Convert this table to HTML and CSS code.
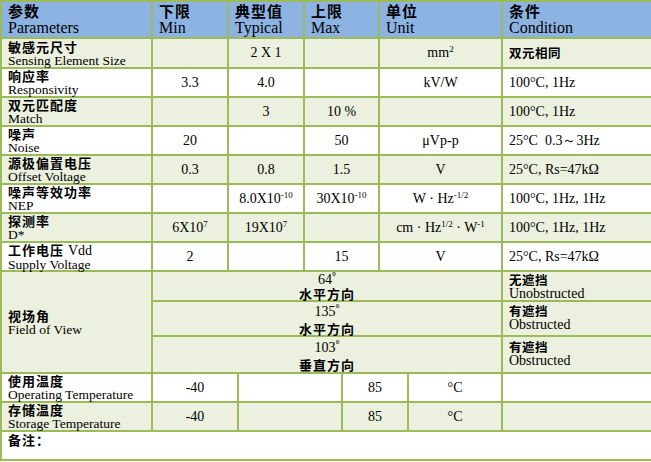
FILE: index.html
```html
<!DOCTYPE html>
<html lang="zh">
<head>
<meta charset="utf-8">
<title>Parameters</title>
<link rel="stylesheet" href="styles.css">
</head>
<body>
<div class="sheet">
  <div class="c h lab"><span class="zh hz">参数</span><span class="en he">Parameters</span></div>
  <div class="c h lab"><span class="zh hz">下限</span><span class="en he">Min</span></div>
  <div class="c h lab sp2"><span class="zh hz">典型值</span><span class="en he">Typical</span></div>
  <div class="c h lab sp2"><span class="zh hz">上限</span><span class="en he">Max</span></div>
  <div class="c h lab sp2"><span class="zh hz">单位</span><span class="en he">Unit</span></div>
  <div class="c h lab"><span class="zh hz">条件</span><span class="en he">Condition</span></div>

  <div class="c g lab"><span class="zh">敏感元尺寸</span><span class="en">Sensing Element Size</span></div>
  <div class="c g ctr"></div>
  <div class="c g ctr sp2"><span class="v">2 X 1</span></div>
  <div class="c g ctr sp2"></div>
  <div class="c g ctr sp2"><span class="v">mm<sup>2</sup></span></div>
  <div class="c g lab"><span class="zh cz">双元相同</span></div>

  <div class="c w lab"><span class="zh">响应率</span><span class="en">Responsivity</span></div>
  <div class="c w ctr"><span class="v">3.3</span></div>
  <div class="c w ctr sp2"><span class="v">4.0</span></div>
  <div class="c w ctr sp2"></div>
  <div class="c w ctr sp2"><span class="v">kV/W</span></div>
  <div class="c w lab"><span class="v">100°C, 1Hz</span></div>

  <div class="c g lab"><span class="zh">双元匹配度</span><span class="en">Match</span></div>
  <div class="c g ctr"></div>
  <div class="c g ctr sp2"><span class="v">3</span></div>
  <div class="c g ctr sp2"><span class="v">10 %</span></div>
  <div class="c g ctr sp2"></div>
  <div class="c g lab"><span class="v">100°C, 1Hz</span></div>

  <div class="c w lab"><span class="zh">噪声</span><span class="en">Noise</span></div>
  <div class="c w ctr"><span class="v">20</span></div>
  <div class="c w ctr sp2"></div>
  <div class="c w ctr sp2"><span class="v">50</span></div>
  <div class="c w ctr sp2"><span class="v">μVp-p</span></div>
  <div class="c w lab"><span class="v">25°C&nbsp;&nbsp;0.3～3Hz</span></div>

  <div class="c g lab"><span class="zh">源极偏置电压</span><span class="en">Offset Voltage</span></div>
  <div class="c g ctr"><span class="v">0.3</span></div>
  <div class="c g ctr sp2"><span class="v">0.8</span></div>
  <div class="c g ctr sp2"><span class="v">1.5</span></div>
  <div class="c g ctr sp2"><span class="v">V</span></div>
  <div class="c g lab"><span class="v">25°C, Rs=47kΩ</span></div>

  <div class="c w lab"><span class="zh">噪声等效功率</span><span class="en">NEP</span></div>
  <div class="c w ctr"></div>
  <div class="c w ctr sp2"><span class="v">8.0X10<sup>-10</sup></span></div>
  <div class="c w ctr sp2"><span class="v">30X10<sup>-10</sup></span></div>
  <div class="c w ctr sp2"><span class="v">W · Hz<sup>-1/2</sup></span></div>
  <div class="c w lab"><span class="v">100°C, 1Hz, 1Hz</span></div>

  <div class="c g lab"><span class="zh">探测率</span><span class="en">D*</span></div>
  <div class="c g ctr"><span class="v">6X10<sup>7</sup></span></div>
  <div class="c g ctr sp2"><span class="v">19X10<sup>7</sup></span></div>
  <div class="c g ctr sp2"></div>
  <div class="c g ctr sp2"><span class="v">cm · Hz<sup>1/2</sup> · W<sup>-1</sup></span></div>
  <div class="c g lab"><span class="v">100°C, 1Hz, 1Hz</span></div>

  <div class="c w lab"><span class="zh">工作电压 <span class="inl">Vdd</span></span><span class="en">Supply Voltage</span></div>
  <div class="c w ctr"><span class="v">2</span></div>
  <div class="c w ctr sp2"></div>
  <div class="c w ctr sp2"><span class="v">15</span></div>
  <div class="c w ctr sp2"><span class="v">V</span></div>
  <div class="c w lab"><span class="v">25°C, Rs=47kΩ</span></div>

  <div class="c g lab fov-name"><span class="zh">视场角</span><span class="en">Field of View</span></div>
  <div class="c g ctr mid m1"><span class="v">64<sup class="deg">°</sup></span><span class="zh">水平方向</span></div>
  <div class="c g lab top t1"><span class="zh cz">无遮挡</span><span class="en">Unobstructed</span></div>
  <div class="c g ctr mid m2"><span class="v">135<sup class="deg">°</sup></span><span class="zh">水平方向</span></div>
  <div class="c g lab top t2"><span class="zh cz">有遮挡</span><span class="en">Obstructed</span></div>
  <div class="c g ctr mid m3"><span class="v">103<sup class="deg">°</sup></span><span class="zh">垂直方向</span></div>
  <div class="c g lab top t3"><span class="zh cz">有遮挡</span><span class="en">Obstructed</span></div>

  <div class="c w lab"><span class="zh">使用温度</span><span class="en">Operating Temperature</span></div>
  <div class="c w ctr sp2"><span class="v">-40</span></div>
  <div class="c w ctr sp2"></div>
  <div class="c w ctr sp2"><span class="v">85</span></div>
  <div class="c w ctr"><span class="v">°C</span></div>
  <div class="c w lab"></div>

  <div class="c g lab"><span class="zh">存储温度</span><span class="en">Storage Temperature</span></div>
  <div class="c g ctr sp2"><span class="v">-40</span></div>
  <div class="c g ctr sp2"></div>
  <div class="c g ctr sp2"><span class="v">85</span></div>
  <div class="c g ctr"><span class="v">°C</span></div>
  <div class="c g lab"></div>

  <div class="c w lab top note"><span class="zh">备注：</span></div>
</div>
</body>
</html>
```
FILE: styles.css
```css
html, body {
  margin: 0;
  padding: 0;
  overflow: hidden;
  background: #ffffff;
}

body {
  width: 651px;
  height: 462px;
  font-family: "Liberation Serif", "Noto Sans CJK SC", serif;
  color: #000000;
}

.sheet {
  display: grid;
  grid-template-columns: 149px 74px 8px 64px 36px 35px 27px 92px 150px;
  grid-template-rows: 35px 28px 27px 27px 27px 27px 27px 27px 27px 28px 33px 35px 27px 27px 27px;
  gap: 2px;
  padding: 2px;
  width: max-content;
  background: #9bbb59;
}

.c {
  display: flex;
  flex-direction: column;
  justify-content: center;
  min-width: 0;
  white-space: nowrap;
}

.h { background: #8db3e2; }
.g { background: #ebf1de; }
.w { background: #ffffff; }

.sp2 { grid-column: span 2; }

.lab {
  align-items: flex-start;
  padding-left: 6px;
}

.ctr {
  align-items: center;
  text-align: center;
}

.top { justify-content: flex-start; }

.zh {
  font-family: "Noto Sans CJK SC", "Noto Sans CJK TC", sans-serif;
  font-weight: 700;
  font-size: 13px;
  line-height: 14px;
  letter-spacing: 1px;
}

.en {
  font-family: "Liberation Serif", serif;
  font-size: 13.5px;
  line-height: 13px;
}

.inl {
  font-family: "Liberation Serif", serif;
  font-size: 14px;
  font-weight: 400;
  letter-spacing: 0;
}

.hz {
  font-size: 15px;
  line-height: 16px;
  letter-spacing: 1px;
}

.he {
  font-size: 16px;
  line-height: 17px;
}

.cz {
  font-size: 12.5px;
  letter-spacing: 0.5px;
}

.v {
  font-family: "Liberation Serif", serif;
  font-size: 14px;
  line-height: 16px;
}

sup {
  font-size: 9px;
  line-height: 0;
  vertical-align: 5px;
}

sup.deg {
  font-size: 10px;
  font-weight: 700;
  vertical-align: 4px;
}

.fov-name {
  grid-column: 1 / 2;
  grid-row: span 3;
}

.mid {
  grid-column: 2 / 9;
}

.m1 { justify-content: flex-start; padding-top: 1px; }
.m1 .v { line-height: 14px; }

.m2 { justify-content: flex-start; padding-top: 2px; gap: 2px; }
.m3 { justify-content: flex-start; padding-top: 3px; gap: 2px; }

.t1 { padding-top: 1px; }
.t2 { padding-top: 2px; }
.t3 { padding-top: 3px; }

.t1 .en, .t2 .en, .t3 .en { font-size: 14px; }

.note {
  grid-column: 1 / -1;
  padding-top: 1px;
}
```
